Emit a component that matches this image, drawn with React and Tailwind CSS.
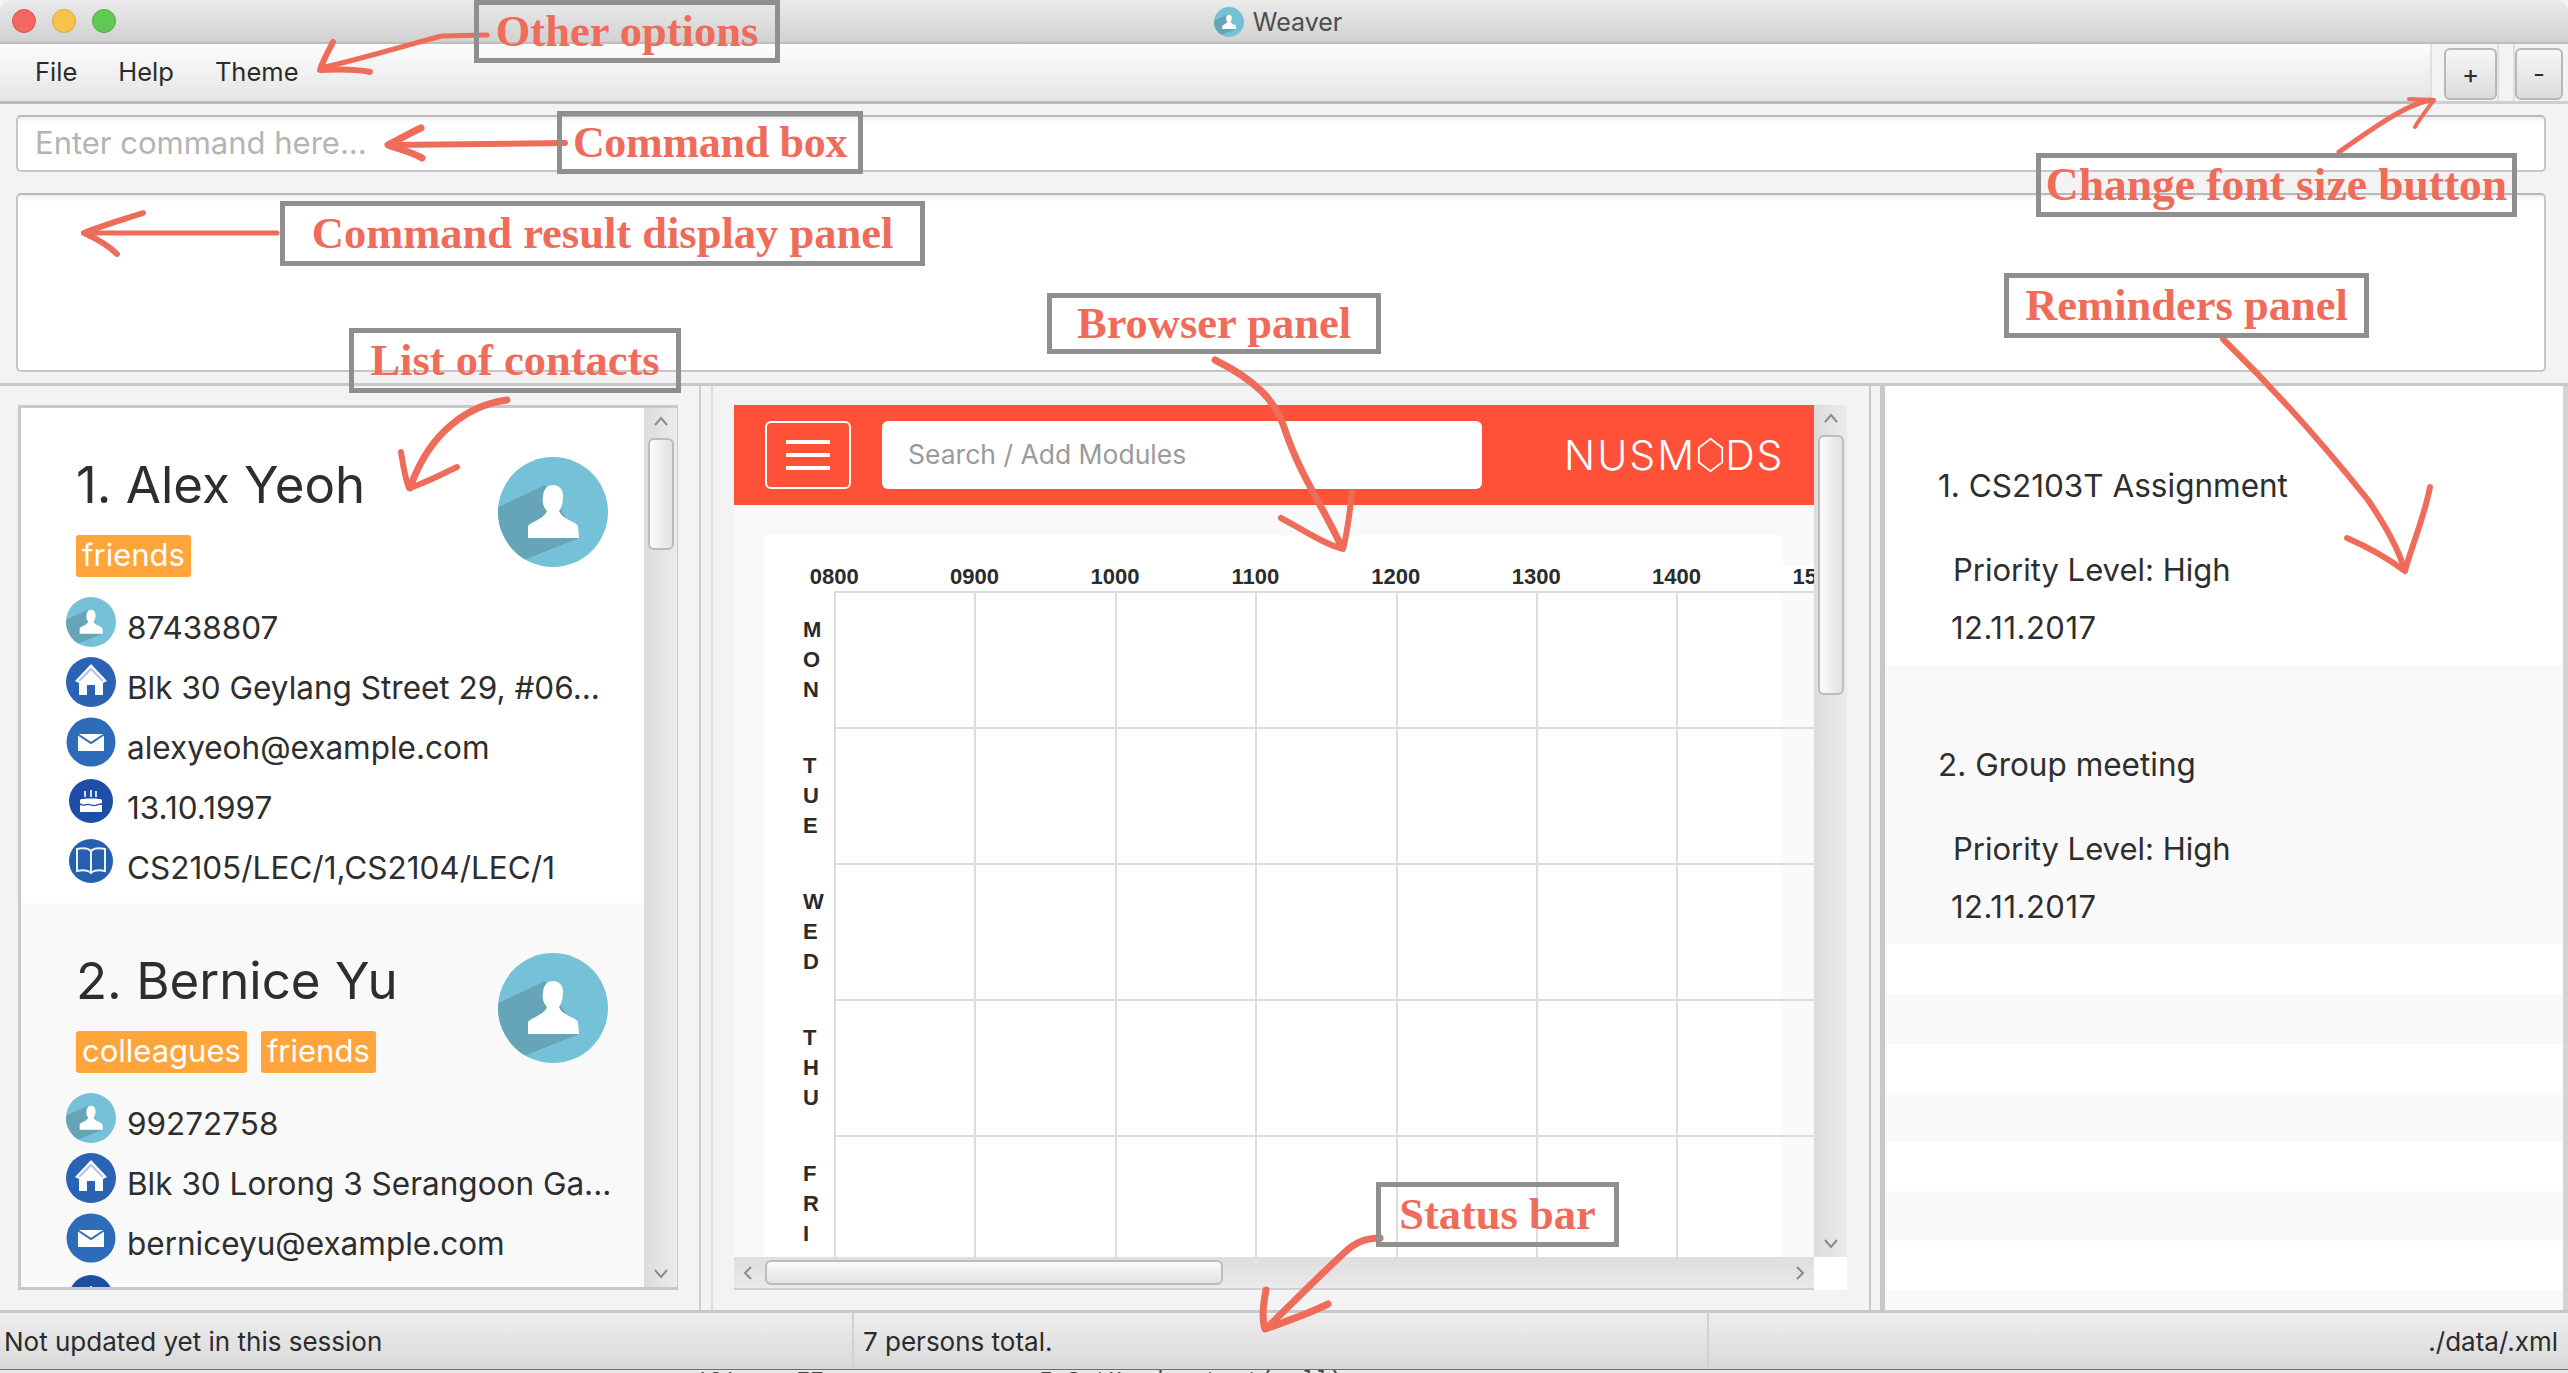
import React from "react";

function Avatar({ id, className }) {
  return (
    <svg viewBox="0 0 110 110" className={className}>
      <defs>
        <clipPath id={id}>
          <circle cx="55" cy="55" r="55" />
        </clipPath>
      </defs>
      <circle cx="55" cy="55" r="55" fill="#75c1d7" />
      <polygon points="-6,53 47,28 81,81 26,103 -6,80" fill="#65a5b7" clipPath={`url(#${id})`} />
      <path d="M30 81 L30 69 C34 64 46 62 49 54 C45 50 44 45 45 39 C46 31 50 28 55 28 C61 28 65 32 65 39 C65 45 64 50 61 54 C64 62 77 64 80 69 L81 81 Z" fill="#fff" />
    </svg>
  );
}

function HomeIcon() {
  return (
    <svg viewBox="0 0 50 50" className="w-[50px] h-[50px]">
      <circle cx="25" cy="25" r="25" fill="#2a63b4" />
      <path d="M25 7 L41 24 L37 26 L37 38 L29 38 L29 28 L21 28 L21 38 L13 38 L13 26 L9 24 Z" fill="#fff" />
      <path d="M13 24 L25 12 L37 24" fill="none" stroke="#b6c2e6" strokeWidth="2" />
    </svg>
  );
}

function MailIcon() {
  return (
    <svg viewBox="0 0 50 50" className="w-[50px] h-[50px]">
      <circle cx="25" cy="25" r="24.5" fill="#2c6cb8" />
      <rect x="12" y="17" width="26" height="17" fill="#fff" />
      <path d="M12 17.5 L25 26 L38 17.5" fill="none" stroke="#2c6cb8" strokeWidth="2" />
    </svg>
  );
}

function CakeIcon() {
  return (
    <svg viewBox="0 0 44 44" className="w-[44px] h-[44px]">
      <circle cx="22" cy="22" r="22" fill="#1e4ea6" />
      <path d="M11 21 C11 19 33 19 33 21 L33 24 L31 26 L33 26 L33 33 L11 33 L11 26 L13 26 L11 24 Z" fill="#fff" />
      <path d="M11 25 C14 28 17 24 22 26 C27 28 30 24 33 25" fill="none" stroke="#1e4ea6" strokeWidth="1.2" />
      <path d="M16 12 L16 18 M22 11 L22 18 M27 12 L27 18" stroke="#d8def2" strokeWidth="2" />
    </svg>
  );
}

function BookIcon() {
  return (
    <svg viewBox="0 0 44 44" className="w-[44px] h-[44px]">
      <circle cx="22" cy="22" r="22" fill="#2560b0" />
      <path d="M8 10 C13 9 19 9 22 12 C25 9 31 9 36 10 L36 32 C31 31 26 31 23 33 L22 34 L21 33 C18 31 13 31 8 32 Z M22 12 L22 33" fill="none" stroke="#eef1f8" strokeWidth="2" />
    </svg>
  );
}

function Chevron({ dir, className }) {
  const d = {
    up: "M2 11 L8 4 L14 11",
    down: "M2 4 L8 11 L14 4",
    left: "M11 2 L5 8 L11 14",
    right: "M5 2 L11 8 L5 14",
  }[dir];
  return (
    <svg viewBox="0 0 16 16" className={className}>
      <path d={d} fill="none" stroke="#8a8a8a" strokeWidth="2" />
    </svg>
  );
}

function VScroll({ thumb }) {
  return (
    <div className="w-[33px] shrink-0 flex flex-col items-center bg-linear-to-r from-[#dcdcdc] to-[#ececec]">
      <Chevron dir="up" className="w-[18px] h-[16px] mt-[6px] shrink-0" />
      <div className={`w-[26px] mt-[8px] shrink-0 rounded-[6px] border-2 border-[#bcbcbc] bg-linear-to-r from-[#fbfbfb] to-[#e2e2e2] ${thumb}`} />
      <Chevron dir="down" className="w-[18px] h-[16px] mt-auto mb-[5px] shrink-0" />
    </div>
  );
}

function Tag({ children }) {
  return (
    <span className="h-[42px] px-[6px] rounded-[3px] bg-[#ffa53c] text-white text-[31px] leading-[40px]">
      {children}
    </span>
  );
}

function InfoRow({ icon, small, children }) {
  return (
    <div className="h-[60px] flex items-start shrink-0">
      <div className={`w-[50px] flex justify-center shrink-0 ${small ? "mt-[2px]" : ""}`}>{icon}</div>
      <div className="ml-[11px] text-[31.5px] leading-[61px] text-[#2e2e2e] whitespace-nowrap">{children}</div>
    </div>
  );
}

function Card({ id, pt, bg, name, tags, phone, address, email, birthday, modules }) {
  return (
    <div className={`h-[495px] shrink-0 ${pt} ${bg}`}>
      <div className="flex justify-between items-start pl-[55px] pr-[36px]">
        <div>
          <div className="text-[51px] leading-[58px] text-[#2e2e2e] whitespace-nowrap">{name}</div>
          <div className="flex gap-[14px] mt-[21px]">
            {tags.map((t) => (
              <Tag key={t}>{t}</Tag>
            ))}
          </div>
        </div>
        <Avatar id={id} className="w-[110px] h-[110px] mt-[1px] shrink-0" />
      </div>
      <div className="mt-[20px] pl-[45px] flex flex-col">
        <InfoRow icon={<Avatar id={`${id}s`} className="w-[50px] h-[50px]" />}>{phone}</InfoRow>
        <InfoRow icon={<HomeIcon />}>{address}</InfoRow>
        <InfoRow icon={<MailIcon />}>{email}</InfoRow>
        <InfoRow small icon={<CakeIcon />}>{birthday}</InfoRow>
        {modules && <InfoRow small icon={<BookIcon />}>{modules}</InfoRow>}
      </div>
    </div>
  );
}

function Reminder({ bg, title }) {
  return (
    <div className={`h-[279px] shrink-0 pl-[53px] pt-[80px] leading-[40px] text-[#2e2e2e] ${bg}`}>
      <div className="text-[31.5px]">{title}</div>
      <div className="mt-[44px] ml-[15px] text-[31px]">Priority Level: High</div>
      <div className="mt-[18px] ml-[13px] text-[31px] tracking-[0.5px]">12.11.2017</div>
    </div>
  );
}

const HOURS = ["0800", "0900", "1000", "1100", "1200", "1300", "1400", "1500"];
const DAYS = ["MON", "TUE", "WED", "THU", "FRI"];

function Timetable() {
  return (
    <div className="flex-1 min-h-0 overflow-hidden bg-[#f9f9f9] pl-[30px] pt-[30px]">
      <div className="w-[1019px] h-full bg-white">
        <div className="w-[1060px]">
          <div className="h-[30px]" />
          <div className="h-[26px] flex bg-white font-['Liberation_Sans',sans-serif] text-[22px] font-bold leading-[24px] text-[#2b2b2b]">
            {HOURS.map((h) => (
              <div key={h} className="w-[140.4px] shrink-0 text-center">
                {h}
              </div>
            ))}
          </div>
          <div className="h-[2px] ml-[70px] bg-[#dddddd]" />
          {DAYS.map((d) => (
            <div key={d} className="flex h-[136px]">
              <div className="w-[70px] shrink-0 pl-[39px] pt-[22px] font-['Liberation_Sans',sans-serif] text-[22px] leading-[30px] font-bold text-[#2b2b2b]">
                {d.split("").map((c) => (
                  <div key={c}>{c}</div>
                ))}
              </div>
              <div className="flex flex-1 border-b-2 border-[#dddddd]">
                {HOURS.map((h) => (
                  <div key={h} className="w-[140.4px] shrink-0 border-l-2 border-[#dddddd]" />
                ))}
              </div>
            </div>
          ))}
        </div>
      </div>
    </div>
  );
}

function Label({ className, children }) {
  return (
    <div className={`absolute flex items-center justify-center border-[5px] border-[#8f8f8f] font-['Liberation_Serif',serif] font-bold text-[#ef6c5a] whitespace-nowrap pointer-events-none ${className}`}>
      {children}
    </div>
  );
}

function Arrows() {
  return (
    <svg viewBox="0 0 2568 1373" className="absolute left-0 top-0 w-[2568px] h-[1373px] pointer-events-none" fill="none" stroke="#ef6c5a" strokeLinecap="round" strokeLinejoin="round">
      <path d="M487 35 L442 36 C410 44 365 58 321 68" strokeWidth="5" />
      <path d="M333 42 C329 50 323 60 320 70 C340 69 355 69 370 72" strokeWidth="6" />
      <path d="M565 143 L390 145" strokeWidth="6" />
      <path d="M421 128 C408 134 398 140 388 145 C398 149 412 152 422 158" strokeWidth="7" />
      <path d="M277 233 L85 233" strokeWidth="5" />
      <path d="M143 213 C125 219 100 226 84 233 C95 238 108 245 117 254" strokeWidth="6" />
      <path d="M2339 152 C2370 130 2405 105 2430 100" strokeWidth="5" />
      <path d="M2409 99 L2434 100 C2428 108 2420 118 2415 127" strokeWidth="4" />
      <path d="M507 400 C470 405 430 430 410 488" strokeWidth="7" />
      <path d="M401 452 C403 465 405 478 409 488 C425 483 440 475 457 467" strokeWidth="6" />
      <path d="M1215 360 C1255 380 1276 400 1285 430 C1300 475 1325 510 1341 546" strokeWidth="7" />
      <path d="M1281 518 C1300 528 1325 545 1343 549 C1348 530 1350 510 1352 492" strokeWidth="6" />
      <path d="M2223 339 C2270 385 2320 440 2368 500 C2385 525 2398 550 2403 565" strokeWidth="6" />
      <path d="M2347 538 C2370 548 2390 560 2405 571 C2412 545 2425 515 2430 487" strokeWidth="6" />
      <path d="M1380 1238 C1366 1238 1356 1242 1345 1252 C1315 1280 1285 1310 1267 1328" strokeWidth="7" />
      <path d="M1266 1290 C1263 1305 1262 1320 1265 1329 C1285 1322 1308 1314 1328 1304" strokeWidth="7" />
    </svg>
  );
}

export default function App() {
  return (
    <div className="relative w-[2568px] h-[1373px] overflow-hidden bg-[#f3f3f3] flex flex-col font-['Inter',sans-serif]">
      {/* title bar */}
      <div className="h-[44px] shrink-0 rounded-t-[10px] bg-linear-to-b from-[#ebebeb] to-[#d1d1d1] border-b-2 border-[#bdbdbd] relative flex items-center justify-center">
        <div className="absolute left-[12px] top-[9px] flex gap-[16px]">
          <div className="w-[24px] h-[24px] rounded-full bg-[#f4695f] border border-[#d9534a]" />
          <div className="w-[24px] h-[24px] rounded-full bg-[#f8c34d] border border-[#dea53a]" />
          <div className="w-[24px] h-[24px] rounded-full bg-[#62c854] border border-[#4fae42]" />
        </div>
        <div className="flex items-center gap-[9px] mr-[12px] mt-[2px]">
          <Avatar id="titleicon" className="w-[30px] h-[30px]" />
          <span className="text-[25px] leading-[30px] text-[#4d4d4d]">Weaver</span>
        </div>
      </div>

      {/* menu bar */}
      <div className="h-[60px] shrink-0 flex">
        <div className="w-[2430px] bg-linear-to-b from-[#fdfdfd] to-[#e5e5e5] border-b-[3px] border-[#bcbcbc] flex items-center pl-[35px] gap-[41px] text-[25.5px] text-[#2b2b2b]">
          <span>File</span>
          <span>Help</span>
          <span>Theme</span>
        </div>
        <div className="flex-1 flex items-start bg-[#f3f3f3] border-b-[3px] border-[#cfcfcf] pr-[4px]">
          <div className="w-[14px] h-full border-l-2 border-[#e0e0e0]" />
          <button className="w-[53px] h-[52px] mt-[4px] rounded-[6px] border-2 border-[#b8b8b8] bg-linear-to-b from-[#f6f6f6] to-[#dcdcdc] text-[26px] leading-none text-[#2b2b2b]">+</button>
          <div className="w-[18px] h-full border-x-2 border-[#dfdfdf]" />
          <button className="w-[48px] h-[52px] mt-[4px] rounded-[6px] border-2 border-[#b8b8b8] bg-linear-to-b from-[#f6f6f6] to-[#dcdcdc] text-[26px] leading-none text-[#2b2b2b]">-</button>
        </div>
      </div>

      {/* command + result */}
      <div className="h-[279px] shrink-0 pl-[16px] pr-[22px] pt-[11px] flex flex-col gap-[21px]">
        <div className="h-[57px] shrink-0 rounded-[5px] bg-white border-2 border-[#c6c6c6] border-t-[#b9b9b9] shadow-[inset_0_7px_6px_-6px_rgba(0,0,0,0.10)] flex items-center pl-[17px] text-[31px] text-[#b4b4b4]">
          Enter command here...
        </div>
        <div className="h-[179px] shrink-0 rounded-[5px] bg-white border-2 border-[#c6c6c6] border-t-[#b9b9b9] shadow-[inset_0_7px_6px_-6px_rgba(0,0,0,0.10)]" />
      </div>

      {/* split pane */}
      <div className="flex-1 min-h-0 flex border-t-[3px] border-[#c8c8c8]">
        {/* list */}
        <div className="w-[699px] shrink-0 pl-[18px] pr-[21px] pt-[19px] pb-[20px]">
          <div className="h-full border-[3px] border-r border-[#c8c8c8] flex bg-white">
            <div className="flex-1 min-w-0 overflow-hidden flex flex-col">
              <Card id="a1" pt="pt-[48px]" bg="bg-white" name="1. Alex Yeoh" tags={["friends"]} phone="87438807" address="Blk 30 Geylang Street 29, #06..." email="alexyeoh@example.com" birthday="13.10.1997" modules="CS2105/LEC/1,CS2104/LEC/1" />
              <Card id="a2" pt="pt-[49px]" bg="bg-[#f9f9f9]" name="2. Bernice Yu" tags={["colleagues", "friends"]} phone="99272758" address="Blk 30 Lorong 3 Serangoon Ga..." email="berniceyu@example.com" />
            </div>
            <VScroll thumb="h-[112px]" />
          </div>
        </div>
        <div className="w-[14px] shrink-0 border-x-2 border-[#cccccc] border-r-[#dddddd]" />
        {/* browser */}
        <div className="w-[1156px] shrink-0 pl-[21px] pr-[22px] pt-[19px] pb-[20px]">
          <div className="h-full flex flex-col">
            <div className="flex-1 min-h-0 flex">
              <div className="flex-1 min-w-0 flex flex-col">
                <div className="h-[100px] shrink-0 bg-[#ff5138] flex items-center pl-[31px]">
                  <div className="w-[86px] h-[68px] rounded-[6px] border-2 border-white flex flex-col items-center justify-center gap-[9px]">
                    <div className="w-[44px] h-[4px] bg-white" />
                    <div className="w-[44px] h-[4px] bg-white" />
                    <div className="w-[44px] h-[4px] bg-white" />
                  </div>
                  <div className="w-[600px] h-[68px] ml-[31px] rounded-[6px] bg-white flex items-center pl-[26px] text-[26.5px] text-[#9a9a9a]">
                    Search / Add Modules
                  </div>
                  <div className="ml-[82px] flex items-center text-white text-[41px] leading-[50px] font-light tracking-[2px] whitespace-nowrap">
                    <span>NUSM</span>
                    <svg viewBox="0 0 30 40" className="w-[27px] h-[38px] mx-[1px]">
                      <path d="M15 2 L28 12 L28 28 L15 38 L2 28 L2 12 Z" fill="none" stroke="#fff" strokeWidth="2" />
                    </svg>
                    <span>DS</span>
                  </div>
                </div>
                <Timetable />
              </div>
              <VScroll thumb="h-[260px]" />
            </div>
            <div className="h-[33px] shrink-0 flex">
              <div className="flex-1 flex items-center bg-linear-to-b from-[#dedede] to-[#eaeaea] border-b-2 border-[#d0d0d0] pl-[6px] pr-[6px]">
                <Chevron dir="left" className="w-[16px] h-[18px] shrink-0" />
                <div className="w-[458px] h-[25px] ml-[9px] rounded-[6px] border-2 border-[#bcbcbc] bg-linear-to-b from-[#fbfbfb] to-[#e2e2e2]" />
                <Chevron dir="right" className="w-[16px] h-[18px] ml-auto shrink-0" />
              </div>
              <div className="w-[33px] bg-white" />
            </div>
          </div>
        </div>
        <div className="w-[16px] shrink-0 border-l-2 border-r-[5px] border-[#c8c8c8]" />
        {/* reminders */}
        <div className="flex-1 min-w-0 flex flex-col overflow-hidden">
          <Reminder bg="bg-white" title="1. CS2103T Assignment" />
          <Reminder bg="bg-[#f9f9f9]" title="2. Group meeting" />
          <div className="h-[50px] shrink-0 bg-white" />
          <div className="h-[50px] shrink-0 bg-[#f9f9f9]" />
          <div className="h-[49px] shrink-0 bg-white" />
          <div className="h-[49px] shrink-0 bg-[#f9f9f9]" />
          <div className="h-[49px] shrink-0 bg-white" />
          <div className="h-[50px] shrink-0 bg-[#f9f9f9]" />
          <div className="h-[49px] shrink-0 bg-white" />
          <div className="flex-1 bg-[#f9f9f9]" />
        </div>
        <div className="w-[5px] shrink-0 bg-[#d4d4d4]" />
      </div>

      {/* status bar */}
      <div className="h-[59px] shrink-0 flex border-t-[3px] border-[#c8c8c8] bg-linear-to-b from-[#eeeeee] to-[#d9d9d9] text-[26px] text-[#2b2b2b] whitespace-nowrap">
        <div className="w-[854px] shrink-0 border-r-2 border-[#d2d2d2] pl-[4px] pt-[1px] flex items-center">Not updated yet in this session</div>
        <div className="w-[855px] shrink-0 border-r-2 border-[#d2d2d2] pl-[9px] pt-[1px] flex items-center">7 persons total.</div>
        <div className="flex-1 pr-[10px] pt-[1px] flex items-center justify-end">./data/.xml</div>
      </div>
      {/* what shows behind the window */}
      <div className="h-[4px] shrink-0 bg-[#e9e9e9] border-t border-[#6e6e6e] overflow-hidden flex font-['Liberation_Mono',monospace] text-[23px] leading-[24px] text-[#444444] whitespace-nowrap">
        <span className="ml-[695px]">121</span>
        <span className="ml-[60px]">77</span>
        <span className="ml-[160px]">userIsSetHeader.text(null);</span>
      </div>

      {/* annotations */}
      <Arrows />
      <Label className="left-[474px] top-0 w-[306px] h-[63px] text-[44.5px]">Other options</Label>
      <Label className="left-[557px] top-[111px] w-[306px] h-[63px] text-[44px] tracking-[-0.3px]">Command box</Label>
      <Label className="left-[280px] top-[201px] w-[645px] h-[65px] text-[44.5px]">Command result display panel</Label>
      <Label className="left-[349px] top-[328px] w-[332px] h-[65px] text-[44.5px]">List of contacts</Label>
      <Label className="left-[2036px] top-[153px] w-[481px] h-[64px] text-[45.5px]">Change font size button</Label>
      <Label className="left-[2004px] top-[273px] w-[365px] h-[65px] text-[44.5px]">Reminders panel</Label>
      <Label className="left-[1047px] top-[293px] w-[334px] h-[61px] text-[44.5px]">Browser panel</Label>
      <Label className="left-[1376px] top-[1182px] w-[243px] h-[65px] text-[44.5px]">Status bar</Label>
    </div>
  );
}
